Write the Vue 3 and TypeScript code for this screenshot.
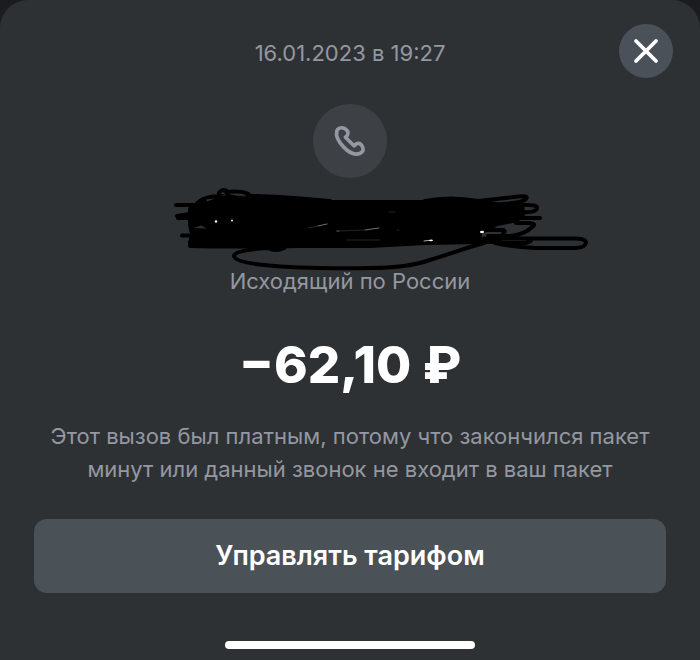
<script setup lang="ts">
import { ref } from 'vue'

interface CallDetails {
  date: string
  direction: string
  amount: string
  note: string
}

const call: CallDetails = {
  date: '16.01.2023 в 19:27',
  direction: 'Исходящий по России',
  amount: '−62,10 ₽',
  note: 'Этот вызов был платным, потому что закончился пакет минут или данный звонок не входит в ваш пакет',
}

const open = ref(true)
</script>

<template>
  <main v-if="open" class="sheet">
    <header class="header">
      <p class="date">{{ call.date }}</p>
      <button class="close" type="button" aria-label="Закрыть" @click="open = false">
        <svg width="54" height="54" viewBox="0 0 54 54" fill="none" stroke="#fff" stroke-width="3.8" stroke-linecap="round">
          <path d="M17 17 37 37M37 17 17 37" />
        </svg>
      </button>
    </header>

    <section class="details">
      <div class="avatar">
        <svg width="74" height="74" viewBox="313 104 74 74" fill="none" stroke="#9498a2" stroke-width="3.7" stroke-linejoin="round" stroke-linecap="round">
          <path d="M336.8 131C337.6 128.2 341 127.1 344 128.2C347.2 129.6 349.2 132.6 347.4 135.200L345.400 137.2L354 145.8L356.200 144C358.4 142.400 360.8 143.6 362.200 146.2C364.200 149.4 363 152 360.2 153.200C355.6 155.200 349.4 153 344 147.4C338.4 141.6 335.6 135.2 336.8 131Z" />
        </svg>
      </div>

      <svg class="scribble" viewBox="110 188 480 79" fill="none" stroke="#000" stroke-width="4" stroke-linecap="round" stroke-linejoin="round" aria-hidden="true">
        <path fill="#000" stroke="none" d="M188 208 196 203 214 197 255 195 290 199 330 200 425 200 450 198 480 200 505 203 524 207 526 214 518 222 498 226 482 234 482 244 425 245 370 248 200 248 188 244 190 234 188 225Z" />
        <path d="M176 205H220M177 216 190 214M178 218 200 218M182 235.500H210M190 242V246Q230 247 300 246" />
        <path stroke-width="6" d="M179 217 194 216" />
        <path d="M196 205Q202 196 222 196L260 199M218 197Q219 190 224 190Q228 190 229 197M226 192Q250 190 251 198M250 196Q275 196 330 201" />
        <path d="M425 201Q450 196 478 201L514 197Q530 195 526 199Q522 203 502 204M504 205H528Q540 205 536 210Q532 213 519 212M518 218H540M516 223H530Q537 224 532 227Q524 235 510 236H488M485 230H503Q507 231 501 236" />
        <path d="M484 238.500H576Q586 239 586 242.500Q585 248 575 248H536Q512 247 495 243H525Q532 242 531 239M480 242H500" />
        <path d="M268 248Q234 250 234 256Q235 262 264 265Q302 269 370 268Q407 268 430 260C453 253 465 248 484 243M268 248Q276 252 284 248" />
        <g fill="#2e3134" stroke="none">
          <path d="M194 228 201 225.500 207 228.500ZM206 199.500 215 198.500 207 201.500ZM222 195 226 194.500 224 196ZM232 195.500 243 195 246 196.500Z" />
        </g>
        <g stroke="#aaa" stroke-width="1">
          <path d="M318 226 327 224M337 231H339M365 230 379 228" opacity=".65" />
          <path d="M424 241 432 240" />
        </g>
        <g stroke="#333" stroke-width=".7">
          <path d="M308 228 318 226M340 231 365 230M347 240H380M389 212H395M397 230H399" />
        </g>
        <g fill="#fff" stroke="none">
          <circle cx="216" cy="221.500" r="1.200" />
          <circle cx="232" cy="220.500" r=".9" />
          <ellipse cx="482" cy="232" rx="2" ry="1.200" />
          <ellipse cx="431" cy="240.500" rx="2" ry=".8" />
        </g>
      </svg>

      <p class="direction">{{ call.direction }}</p>
      <h1 class="amount">{{ call.amount }}</h1>
      <p class="note">{{ call.note }}</p>
    </section>

    <button class="manage" type="button">Управлять тарифом</button>
    <div class="home-indicator"></div>
  </main>
</template>

<style>
body {
  margin: 0;
  background: #1b1c20;
}
</style>

<style scoped>
.sheet {
  box-sizing: border-box;
  min-height: 100vh;
  padding: 24px 27px 11px;
  display: flex;
  flex-direction: column;
  background: #2e3134;
  border-radius: 28px 28px 0 0;
  color: #9498a2;
  font-family: Inter, "Liberation Sans", sans-serif;
}

p,
h1 {
  margin: 0;
}

button {
  border: 0;
  padding: 0;
  font-family: inherit;
  cursor: pointer;
}

.header {
  display: grid;
  grid-template-columns: 1fr auto 1fr;
  align-items: center;
}

.date {
  grid-column: 2;
  padding-top: 4px;
  font-size: 22px;
  line-height: 28px;
}

.close {
  justify-self: end;
  width: 54px;
  height: 54px;
  border-radius: 50%;
  background: #4b5159;
}

.close svg,
.avatar svg {
  display: block;
}

.details {
  display: flex;
  flex-direction: column;
  align-items: center;
  text-align: center;
}

.avatar {
  margin-top: 26px;
  border-radius: 50%;
  background: #3d4145;
}

.scribble {
  width: 480px;
  height: 79px;
  max-width: 100%;
  margin-top: 10px;
  overflow: visible;
}

.direction {
  font-size: 22px;
  line-height: 28px;
}

.amount {
  margin-top: 42px;
  color: #fff;
  font-size: 51px;
  font-weight: 800;
  line-height: 56px;
}

.note {
  margin-top: 27px;
  max-width: 632px;
  font-size: 22px;
  line-height: 33px;
}

.manage {
  margin: 33px 7px 0;
  padding-bottom: 2px;
  height: 74px;
  border-radius: 13px;
  background: #4a5157;
  color: #fff;
  font-size: 27px;
  font-weight: 600;
}

.home-indicator {
  width: 250px;
  height: 8px;
  margin: 48px auto 0;
  border-radius: 4px;
  background: #fff;
}
</style>
